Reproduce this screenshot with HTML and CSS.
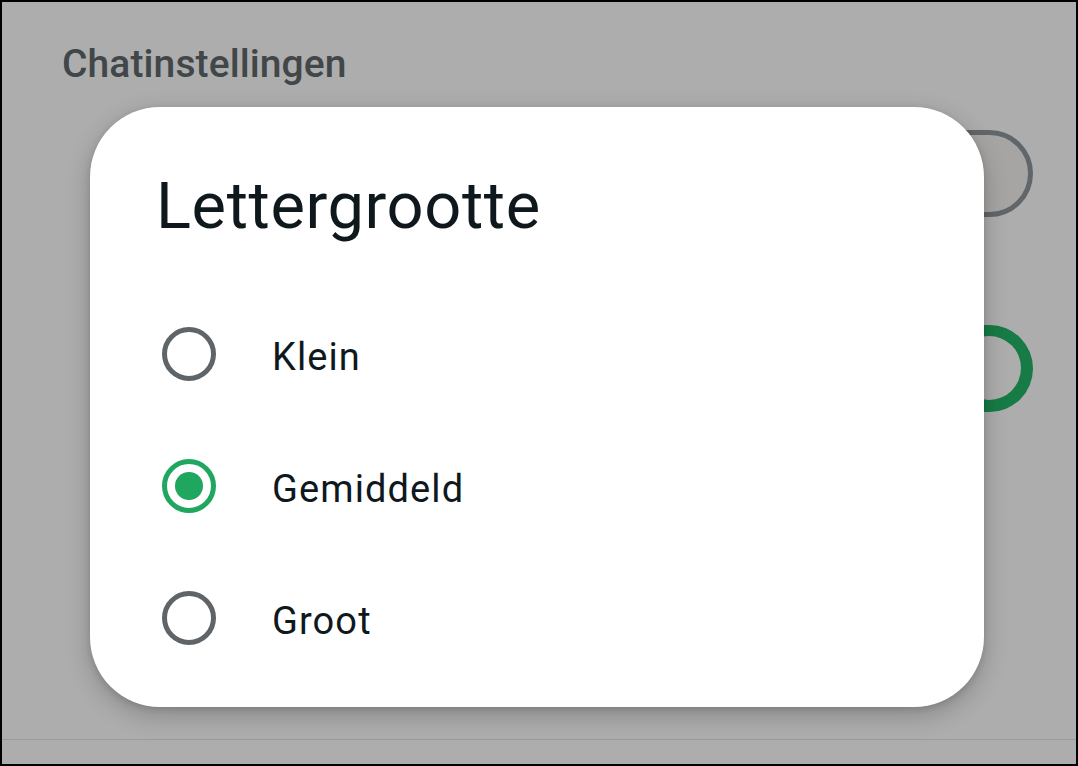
FILE: index.html
```html
<!DOCTYPE html>
<html lang="nl">
<head>
<meta charset="utf-8">
<title>Chatinstellingen</title>
<link rel="stylesheet" href="styles.css">
</head>
<body>
<div class="frame">
  <h1 class="page-title">Chatinstellingen</h1>
  <div class="settings">
    <div class="setting-row">
      <span class="switch switch-off"><span class="thumb"></span></span>
    </div>
    <div class="setting-row">
      <span class="switch switch-on"><span class="thumb"></span></span>
    </div>
  </div>
  <div class="divider"></div>

  <div class="scrim">
    <div class="dialog" role="dialog" aria-labelledby="dlg-title">
      <h2 class="dialog-title" id="dlg-title">Lettergrootte</h2>
      <ul class="options">
        <li class="option"><span class="radio"></span><span class="label">Klein</span></li>
        <li class="option"><span class="radio checked"></span><span class="label">Gemiddeld</span></li>
        <li class="option"><span class="radio"></span><span class="label">Groot</span></li>
      </ul>
    </div>
  </div>
</div>
</body>
</html>
```
FILE: styles.css
```css
* { box-sizing: border-box; }
html, body { margin: 0; padding: 0; }
body { font-family: Roboto, "Noto Sans", sans-serif; background: #000; }

.frame {
  position: relative;
  width: 1078px;
  height: 766px;
  border: 2px solid #000;
  background: #ffffff;
  overflow: hidden;
  display: flex;
  flex-direction: column;
}

.page-title {
  margin: 0;
  padding: 39px 0 0 60px;
  font-size: 39px;
  line-height: 46px;
  font-weight: 500;
  letter-spacing: 0.1px;
  color: #60676c;
}

.settings {
  margin-top: 26px;
  padding-right: 43px;
  display: flex;
  flex-direction: column;
  gap: 75px;
}

.setting-row {
  height: 120px;
  display: flex;
  align-items: center;
  justify-content: flex-end;
}

.switch {
  width: 140px;
  height: 87px;
  border-radius: 44px;
  display: flex;
  align-items: center;
}
.switch-off {
  background: #f6f3f1;
  border: 5px solid #90979c;
  padding-left: 14px;
}
.switch-off .thumb {
  width: 40px; height: 40px; border-radius: 50%;
  background: #90979c;
}
.switch-on {
  background: #21b566;
  justify-content: flex-end;
  padding-right: 12px;
}
.switch-on .thumb {
  width: 64px; height: 64px; border-radius: 50%;
  background: #ffffff;
}

.divider {
  margin-top: auto;
  margin-bottom: 24px;
  height: 1px;
  background: #e3e3e3;
}

.scrim {
  position: absolute;
  inset: 0;
  background: rgba(0, 0, 0, 0.32);
  padding: 105px 0 0 88px;
}

.dialog {
  width: 894px;
  height: 600px;
  background: #ffffff;
  border-radius: 70px;
  box-shadow: 0 8px 24px rgba(0, 0, 0, 0.22), 0 2px 6px rgba(0, 0, 0, 0.12);
  padding: 63px 0 0 0;
}

.dialog-title {
  margin: 0 0 0 66px;
  font-size: 65px;
  line-height: 72px;
  font-weight: 400;
  letter-spacing: 0.6px;
  color: #0f181d;
}

.options {
  list-style: none;
  margin: 46px 0 0 0;
  padding: 0 0 0 72px;
}

.option {
  height: 132px;
  display: flex;
  align-items: center;
  gap: 56px;
}

.radio {
  width: 54px;
  height: 54px;
  border-radius: 50%;
  border: 5px solid #5e6468;
  display: flex;
  align-items: center;
  justify-content: center;
  flex: none;
}
.radio.checked {
  border-color: #1fa65f;
}
.radio.checked::after {
  content: "";
  width: 28px;
  height: 28px;
  border-radius: 50%;
  background: #1fa65f;
}

.label {
  padding-top: 5px;
  font-size: 38px;
  color: #0f181d;
  letter-spacing: 1.1px;
}
```
